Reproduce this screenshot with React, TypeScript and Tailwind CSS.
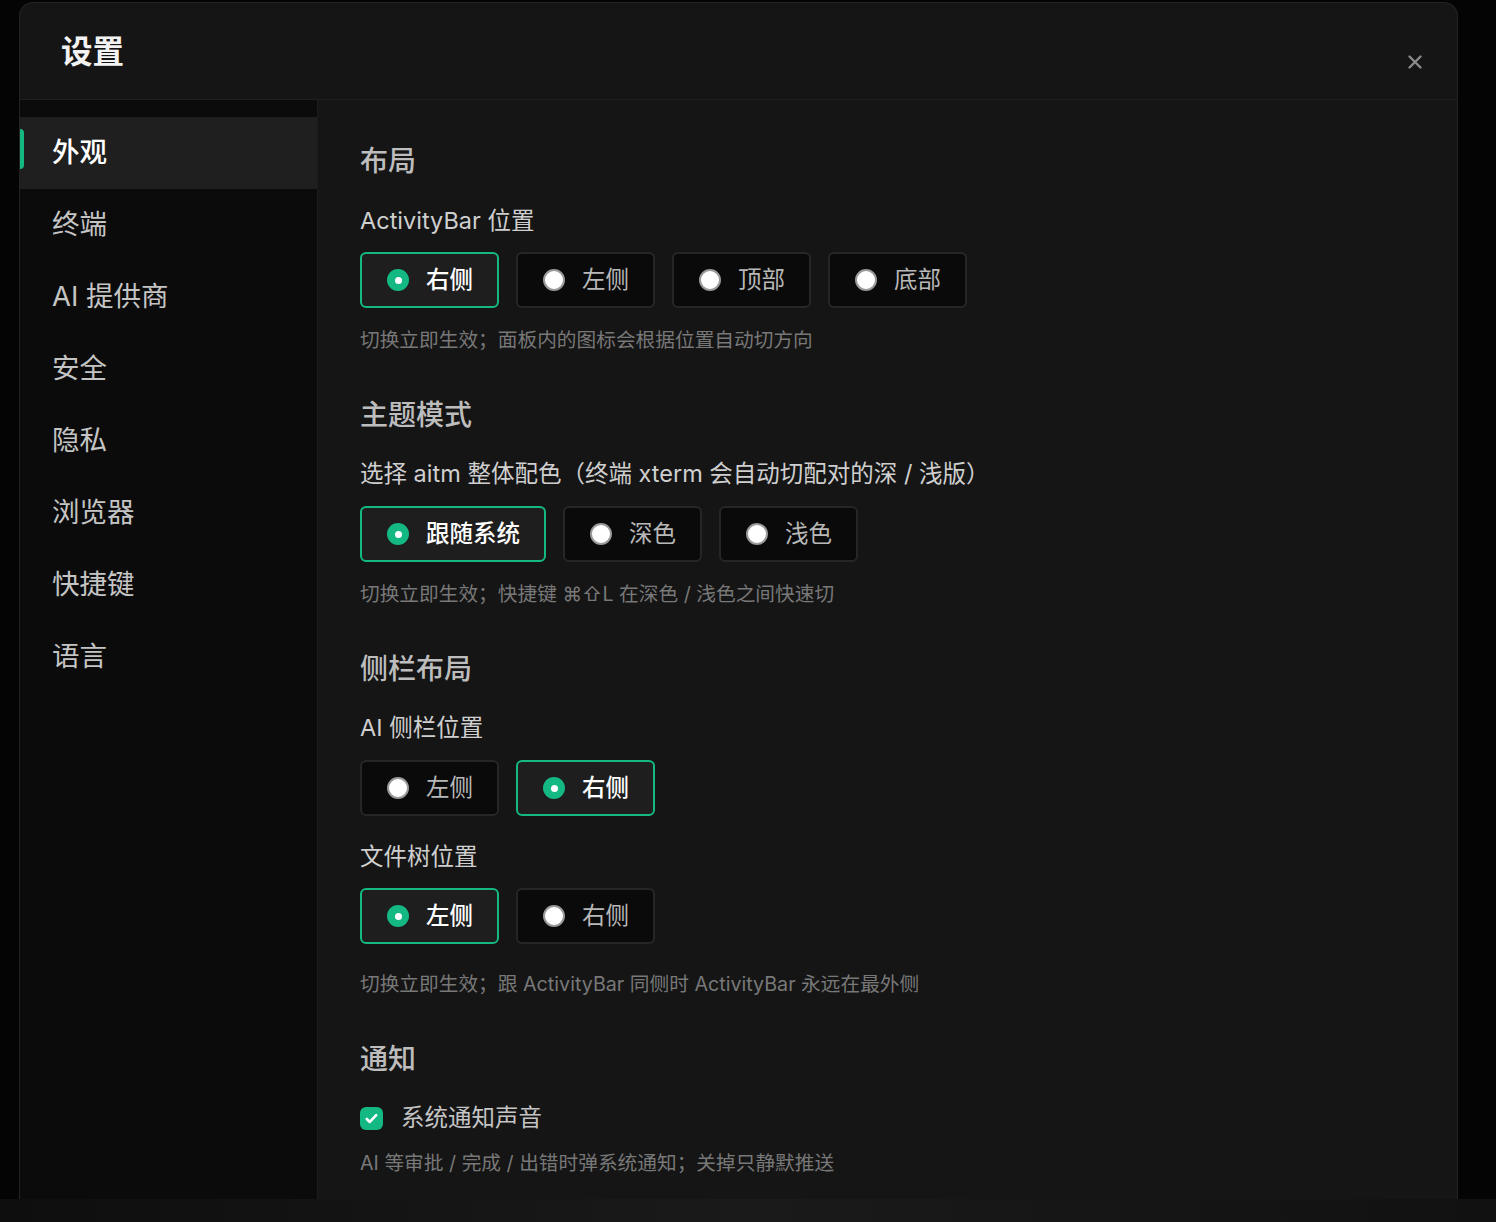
import { useState } from "react"

// ---------------------------------------------------------------------------
// Data
// ---------------------------------------------------------------------------

const NAV = ["外观", "终端", "AI 提供商", "安全", "隐私", "浏览器", "快捷键", "语言"]

const FONT = {
  fontFamily: '"Inter", "Noto Sans CJK SC", "Noto Sans", sans-serif',
}

// ---------------------------------------------------------------------------
// Pieces
// ---------------------------------------------------------------------------

function Radio({ checked }: { checked: boolean }) {
  if (checked) {
    return (
      <span className="flex h-[22px] w-[22px] items-center justify-center rounded-full bg-[#13b883]">
        <span className="h-[7px] w-[7px] rounded-full bg-white" />
      </span>
    )
  }
  return <span className="h-[22px] w-[22px] rounded-full border-2 border-[#9a9a9a] bg-white" />
}

function Option({
  label,
  checked,
  width,
  onClick,
}: {
  label: string
  checked: boolean
  width: string
  onClick: () => void
}) {
  return (
    <button
      onClick={onClick}
      className={
        checked
          ? `flex h-[56px] ${width} items-center gap-[17px] rounded-[6px] border-2 border-[#13b883] bg-[#1e1e1e] pl-[25px] text-[23.5px] font-medium text-white`
          : `flex h-[56px] ${width} items-center gap-[17px] rounded-[6px] border-2 border-[#262626] bg-[#0a0a0a] pl-[25px] text-[23.5px] text-[#b8b8b8]`
      }
    >
      <Radio checked={checked} />
      <span>{label}</span>
    </button>
  )
}

function Group({
  options,
  value,
  onChange,
}: {
  options: { label: string; w: string }[]
  value: string
  onChange: (v: string) => void
}) {
  return (
    <div className="flex gap-[17px]">
      {options.map((o) => (
        <Option
          key={o.label}
          label={o.label}
          width={o.w}
          checked={value === o.label}
          onClick={() => onChange(o.label)}
        />
      ))}
    </div>
  )
}

function SectionTitle({ children, className = "" }: { children: React.ReactNode; className?: string }) {
  return <div className={`text-[28px] font-medium leading-[36px] text-[#bdbdbd] ${className}`}>{children}</div>
}

function Label({ children, className = "" }: { children: React.ReactNode; className?: string }) {
  return <div className={`text-[23.5px] leading-[30px] text-[#cfcfcf] ${className}`}>{children}</div>
}

function Hint({ children, className = "" }: { children: React.ReactNode; className?: string }) {
  return <div className={`text-[19.7px] leading-[26px] text-[#787878] ${className}`}>{children}</div>
}

// ---------------------------------------------------------------------------
// App
// ---------------------------------------------------------------------------

export default function App() {
  const [nav, setNav] = useState("外观")
  const [bar, setBar] = useState("右侧")
  const [theme, setTheme] = useState("跟随系统")
  const [aiSide, setAiSide] = useState("右侧")
  const [tree, setTree] = useState("左侧")
  const [sound, setSound] = useState(true)

  return (
    <div style={FONT} className="h-[1222px] w-[1496px] overflow-hidden bg-[#040404] pl-[19px] pt-[2px]">
      <div className="flex h-[1197px] w-[1439px] flex-col overflow-hidden rounded-t-[14px] border border-b-0 border-[#232323] bg-[#151515]">
        {/* Header */}
        <div className="flex h-[97px] shrink-0 items-start justify-between border-b border-[#1f1f1f] pl-[41px] pr-[34px]">
          <h1 className="pt-[30px] text-[31.5px] font-bold leading-[38px] text-[#f2f2f2]">设置</h1>
          <button className="mt-[51px] text-[#8a8a8a]">
            <svg width="16" height="16" viewBox="0 0 16 16" fill="none" stroke="currentColor" strokeWidth="2.4" strokeLinecap="round">
              <path d="M2.5 2.5l11 11M13.5 2.5l-11 11" />
            </svg>
          </button>
        </div>

        <div className="flex min-h-0 flex-1">
          {/* Sidebar */}
          <nav className="w-[298px] shrink-0 border-r border-[#1c1c1c] bg-[#0b0b0b] pt-[17px]">
            {NAV.map((n) => {
              const active = n === nav
              return (
                <button
                  key={n}
                  onClick={() => setNav(n)}
                  className={
                    active
                      ? "relative flex h-[72px] w-full items-center bg-[#1f1f1f] pl-[32px] text-[27.5px] font-medium text-white"
                      : "relative flex h-[72px] w-full items-center pl-[32px] text-[27.5px] text-[#c4c4c4]"
                  }
                >
                  {active && <span className="absolute left-0 top-[12px] h-[40px] w-[4px] rounded-r bg-[#13b883]" />}
                  {n}
                </button>
              )
            })}
          </nav>

          {/* Content */}
          <main className="flex-1 pl-[42px] pt-[43px]">
            <SectionTitle>布局</SectionTitle>
            <Label className="mt-[27px]">ActivityBar 位置</Label>
            <div className="mt-[16px]">
              <Group
                value={bar}
                onChange={setBar}
                options={[
                  { label: "右侧", w: "w-[139px]" },
                  { label: "左侧", w: "w-[139px]" },
                  { label: "顶部", w: "w-[139px]" },
                  { label: "底部", w: "w-[139px]" },
                ]}
              />
            </div>
            <Hint className="mt-[19px]">切换立即生效；面板内的图标会根据位置自动切方向</Hint>

            <SectionTitle className="mt-[44px]">主题模式</SectionTitle>
            <Label className="mt-[26px]">选择 aitm 整体配色（终端 xterm 会自动切配对的深 / 浅版）</Label>
            <div className="mt-[17px]">
              <Group
                value={theme}
                onChange={setTheme}
                options={[
                  { label: "跟随系统", w: "w-[186px]" },
                  { label: "深色", w: "w-[139px]" },
                  { label: "浅色", w: "w-[139px]" },
                ]}
              />
            </div>
            <Hint className="mt-[19px]">切换立即生效；快捷键 ⌘⇧L 在深色 / 浅色之间快速切</Hint>

            <SectionTitle className="mt-[44px]">侧栏布局</SectionTitle>
            <Label className="mt-[26px]">AI 侧栏位置</Label>
            <div className="mt-[17px]">
              <Group
                value={aiSide}
                onChange={setAiSide}
                options={[
                  { label: "左侧", w: "w-[139px]" },
                  { label: "右侧", w: "w-[139px]" },
                ]}
              />
            </div>
            <Label className="mt-[26px]">文件树位置</Label>
            <div className="mt-[16px]">
              <Group
                value={tree}
                onChange={setTree}
                options={[
                  { label: "左侧", w: "w-[139px]" },
                  { label: "右侧", w: "w-[139px]" },
                ]}
              />
            </div>
            <Hint className="mt-[27px]">切换立即生效；跟 ActivityBar 同侧时 ActivityBar 永远在最外侧</Hint>

            <SectionTitle className="mt-[44px]">通知</SectionTitle>
            <button onClick={() => setSound(!sound)} className="mt-[26px] flex h-[30px] items-center gap-[18px]">
              <span
                className={
                  sound
                    ? "flex h-[23px] w-[23px] items-center justify-center rounded-[6px] bg-[#13b883]"
                    : "flex h-[23px] w-[23px] items-center justify-center rounded-[6px] border-2 border-[#555] bg-[#0a0a0a]"
                }
              >
                {sound && (
                  <svg width="15" height="15" viewBox="0 0 16 16" fill="none" stroke="white" strokeWidth="2.8" strokeLinecap="round" strokeLinejoin="round">
                    <path d="M3 8.5l3.2 3.2L13 4.5" />
                  </svg>
                )}
              </span>
              <span className="text-[23.5px] text-[#c4c4c4]">系统通知声音</span>
            </button>
            <Hint className="mt-[17px]">AI 等审批 / 完成 / 出错时弹系统通知；关掉只静默推送</Hint>
          </main>
        </div>
      </div>
      {/* blurred backdrop strip under the dialog */}
      <div className="-ml-[19px] h-[23px] w-[1496px] bg-gradient-to-r from-[#0e0e0e] via-[#1a1a1a] to-[#111111]" />
    </div>
  )
}
